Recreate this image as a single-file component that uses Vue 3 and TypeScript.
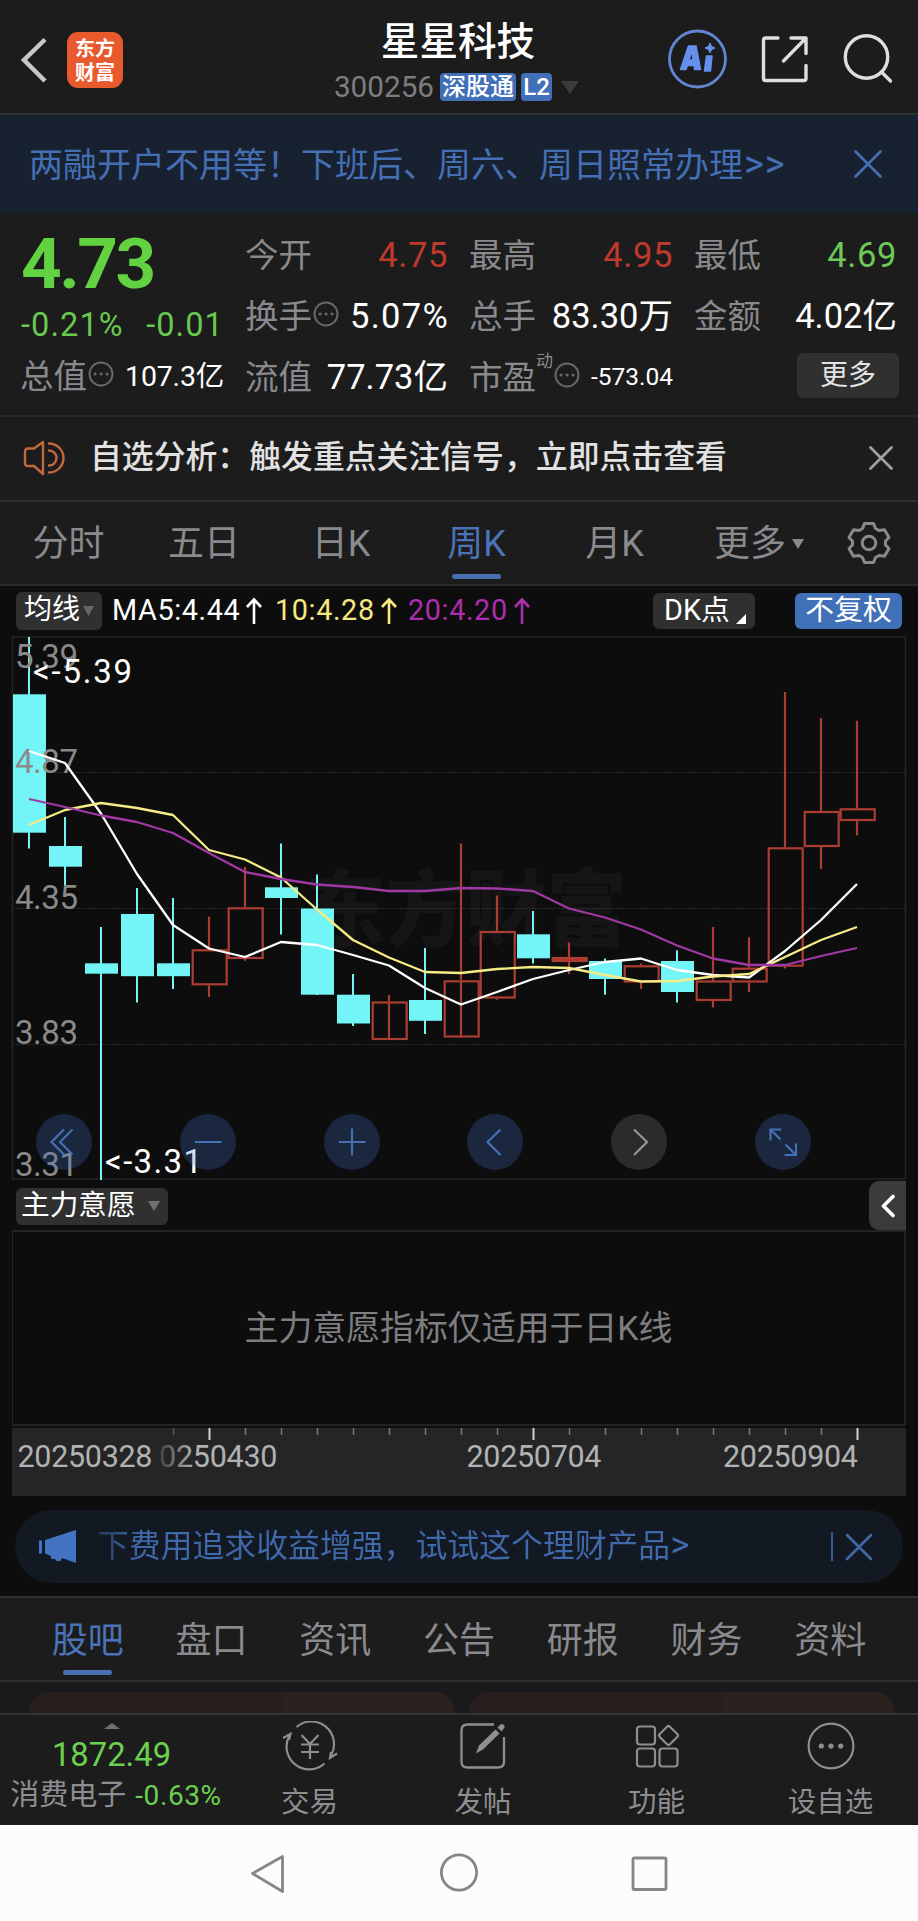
<script setup lang="ts">
interface Candle {
  up: boolean
  high: number
  low: number
  top: number
  bottom: number
}

const c = (up: number, high: number, low: number, top: number, bottom: number): Candle => ({
  up: up === 1, high, low, top, bottom,
})

const candles: Candle[] = [
  c(0, 637, 848.5, 694.3, 832.7),
  c(0, 817, 886, 846, 866.7),
  c(0, 927, 1180, 963.3, 973.7),
  c(0, 888, 1002.5, 914, 976.2),
  c(0, 898, 989, 963.3, 976.2),
  c(1, 916.5, 997, 949.3, 985.3),
  c(1, 867, 960.7, 907.3, 959),
  c(0, 843.5, 934.5, 887.3, 898),
  c(0, 874.5, 995, 908.5, 994.7),
  c(0, 974, 1026, 994.7, 1023.5),
  c(1, 995, 1002, 1001.5, 1040),
  c(0, 948, 1034, 1000, 1020.8),
  c(1, 843.5, 982, 980.3, 1037.5),
  c(1, 895.5, 999.7, 931, 998.5),
  c(0, 911, 963.5, 934.3, 958.3),
  c(1, 942.5, 974, 957, 962),
  c(0, 958.5, 994.7, 961, 979),
  c(1, 963.5, 989, 965.3, 982.5),
  c(0, 950.3, 1002.5, 961, 992),
  c(1, 927, 1007.5, 980.5, 1001),
  c(1, 937.3, 992, 967.7, 982.5),
  c(1, 692, 968.5, 847.3, 966.7),
  c(1, 718, 869, 811, 847),
  c(1, 720.7, 835.5, 808.3, 821),
]
const cx = (i: number): number => 29 + i * 36

const line = (ys: number[]): string => ys.map((y, i) => `${cx(i)},${y}`).join(' ')
const ma5 = line([751, 763, 813.5, 874, 925, 948.5, 957, 942, 945, 955, 965.5, 988, 1004.5, 992, 979, 970, 962, 958.5, 970, 975, 977.5, 951, 920, 884])
const ma10 = line([825, 810, 803, 808, 815, 850, 859.5, 877.5, 909.5, 940, 957.5, 972, 973, 969, 967, 968, 975, 981.5, 981, 976.5, 974, 957, 940, 927])
const ma20 = line([799, 807, 815.5, 822, 833, 853, 872, 879, 884.5, 887, 891, 891, 888, 888.5, 891, 908.5, 917.5, 929.5, 945.5, 958.5, 965, 965, 956, 948])

const scale = [
  { t: '5.39', y: 668 }, { t: '4.87', y: 772.5 }, { t: '4.35', y: 908.5 },
  { t: '3.83', y: 1043.5 }, { t: '3.31', y: 1175.5 },
]
const ticks = Array.from({ length: 20 }, (_, i) => ({ x: 173 + i * 36, long: i % 9 === 1, faint: i === 0 }))
const sections = ['股吧', '盘口', '资讯', '公告', '研报', '财务', '资料']
</script>

<template>
  <div class="app">
    <header class="header">
      <div class="left">
        <svg width="28" height="50" viewBox="0 0 28 50"><path d="M25 4.500L4 25L25 46" fill="none" stroke="#c8c8c8" stroke-width="4.500" /></svg>
        <div class="logo"><span>东方</span><span>财富</span></div>
      </div>
      <div class="title">
        <div class="name">星星科技</div>
        <div class="code">
          <span class="num">300256</span><span class="badge b1">深股通</span><span class="badge b2">L2</span>
          <svg width="18" height="13" viewBox="0 0 18 13"><path d="M0 0H18L9 13Z" fill="#3b3b3b" /></svg>
        </div>
      </div>
      <div class="right">
        <svg width="60" height="60" viewBox="0 0 60 60">
          <circle cx="29.500" cy="30" r="28" fill="none" stroke="#6386d4" stroke-width="2.800" />
          <g fill="#6690ee" stroke="#6690ee" stroke-width="1.500" stroke-linejoin="round">
            <path fill-rule="evenodd" d="M12.500 40.500L20.500 17H28L32.500 40.500H26.500L26 36.500H19.500L18 40.500ZM21 31H25L24.500 23.500H23.500Z" />
            <path d="M38.500 27H44L42.500 42H36.500Z" />
            <path d="M42 14.500L43.300 17.700L46.500 19L43.300 20.300L42 23.500L40.700 20.300L37.500 19L40.700 17.700Z" />
          </g>
        </svg>
        <svg class="export" width="50" height="50" viewBox="0 0 50 50"><g fill="none" stroke="#dedede" stroke-width="3.400" stroke-linecap="round" stroke-linejoin="round"><path d="M18 4H5.500Q3.500 4 3.500 6V44.500Q3.500 46.500 5.500 46.500H44Q46 46.500 46 44.500V31.500" /><path d="M31 4H46V19.500M46 4L23.500 27" /></g></svg>
        <svg class="search" width="50" height="50" viewBox="0 0 50 50"><g fill="none" stroke="#dedede" stroke-width="3.400" stroke-linecap="round"><circle cx="23.500" cy="23" r="21.200" /><path d="M38.500 38L47.500 47" /></g></svg>
      </div>
    </header>

    <div class="banner">
      <span>两融开户不用等！下班后、周六、周日照常办理<i>&gt;&gt;</i></span>
      <svg width="30" height="30" viewBox="0 0 30 30"><path d="M2.500 2.500L27.500 27.500M27.500 2.500L2.500 27.500" stroke="#4570b8" stroke-width="2.600" stroke-linecap="round" /></svg>
    </div>

    <section class="quote">
      <div class="col first">
        <div class="price">4.73</div>
        <div class="change"><span>-0.21%</span><span>-0.01</span></div>
        <div class="row"><label>总值</label><svg class="dots" width="26" height="26" viewBox="0 0 26 26"><circle cx="13" cy="13" r="11.500" /><path d="M7 13h.1M13 13h.1M19 13h.1" /></svg><b class="mid">107.3亿</b></div>
      </div>
      <div class="col">
        <div class="row"><label>今开</label><b class="red">4.75</b></div>
        <div class="row"><label>换手</label><svg class="dots" width="26" height="26" viewBox="0 0 26 26"><circle cx="13" cy="13" r="11.500" /><path d="M7 13h.1M13 13h.1M19 13h.1" /></svg><b class="wide">5.07%</b></div>
        <div class="row"><label>流值</label><b>77.73亿</b></div>
      </div>
      <div class="col">
        <div class="row"><label>最高</label><b class="red">4.95</b></div>
        <div class="row"><label>总手</label><b>83.30万</b></div>
        <div class="row"><label>市盈</label><sup>动</sup><svg class="dots" width="26" height="26" viewBox="0 0 26 26"><circle cx="13" cy="13" r="11.500" /><path d="M7 13h.1M13 13h.1M19 13h.1" /></svg><b class="small">-573.04</b></div>
      </div>
      <div class="col">
        <div class="row"><label>最低</label><b class="green">4.69</b></div>
        <div class="row"><label>金额</label><b>4.02亿</b></div>
        <div class="row"><button class="more">更多</button></div>
      </div>
    </section>

    <div class="notice">
      <svg width="42" height="36" viewBox="0 0 42 36"><g fill="none" stroke="#c0693c" stroke-width="2.400" stroke-linejoin="round" stroke-linecap="round"><path d="M20 2V34L11 26H5Q2 26 2 23V12Q2 8.500 5 8.500H11Z" /><path d="M26 3.500A14.500 14.500 0 0 1 26 32.500M26 10.500A7.500 7.500 0 0 1 26 25.500" /></g></svg>
      <span>自选分析：触发重点关注信号，立即点击查看</span>
      <svg class="x" width="26" height="26" viewBox="0 0 26 26"><path d="M2.500 2.500L23.500 23.500M23.500 2.500L2.500 23.500" stroke="#a0a0a0" stroke-width="2.800" stroke-linecap="round" /></svg>
    </div>

    <nav class="periods">
      <span>分时</span><span>五日</span><span>日K</span><span class="on">周K</span><span>月K</span>
      <span class="drop">更多<svg width="12" height="10" viewBox="0 0 12 10"><path d="M0 0H12L6 10Z" fill="#8a8a8e" /></svg></span>
      <svg class="gear" width="46" height="46" viewBox="0 0 46 46"><g fill="none" stroke="#8a8a8e" stroke-width="3"><path stroke-linejoin="round" d="M18.500 3.500H27.500L29.500 8.500L33 10.500L38.500 9.700L43 17.500L39.500 21V25L43 28.500L38.500 36.300L33 35.500L29.500 37.500L27.500 42.500H18.500L16.500 37.500L13 35.500L7.500 36.300L3 28.500L6.500 25V21L3 17.500L7.500 9.700L13 10.500L16.500 8.500Z" /><circle cx="23" cy="23" r="6.800" /></g></svg>
    </nav>

    <div class="tools">
      <span class="chip ma">均线<svg width="11" height="10" viewBox="0 0 11 10"><path d="M0 0H11L5.500 10Z" fill="#666" /></svg></span>
      <span class="avg a5">MA5:4.44<svg width="18" height="28" viewBox="0 0 18 28"><path d="M9 27V3M2 10L9 2.500L16 10" /></svg></span>
      <span class="avg a10">10:4.28<svg width="18" height="28" viewBox="0 0 18 28"><path d="M9 27V3M2 10L9 2.500L16 10" /></svg></span>
      <span class="avg a20">20:4.20<svg width="18" height="28" viewBox="0 0 18 28"><path d="M9 27V3M2 10L9 2.500L16 10" /></svg></span>
      <span class="chip dk">DK点<svg width="10" height="10" viewBox="0 0 10 10"><path d="M10 0V10H0Z" fill="#fff" /></svg></span>
      <span class="chip adj">不复权</span>
    </div>

    <svg class="chart" width="918" height="546" viewBox="0 635 918 546">
      <text class="mark" x="305" y="940" textLength="322" lengthAdjust="spacingAndGlyphs">东方财富</text>
      <rect x="12.500" y="637" width="893" height="542" fill="none" stroke="#242424" stroke-width="1.600" />
      <path d="M13 772.500H905M13 908.500H905M13 1044.500H905" stroke="#333" stroke-width="1" stroke-dasharray="1.500 1.500" />
      <template v-for="(k, i) in candles" :key="i">
        <g v-if="k.up" stroke="#ac3d33" stroke-width="2.200" fill="none">
          <path :d="`M${cx(i)} ${k.high}V${k.top}M${cx(i)} ${k.bottom}V${k.low}`" />
          <rect :x="cx(i) - 16.300" :y="k.top + 1" width="34" :height="k.bottom - k.top - 2" :fill="k.bottom - k.top < 6 ? '#b5352c' : 'none'" />
        </g>
        <g v-else fill="#73f5f7">
          <rect :x="cx(i) - 1" :y="k.high" width="2" :height="k.low - k.high" />
          <rect :x="cx(i) - 16" :y="k.top" width="33" :height="k.bottom - k.top" />
        </g>
      </template>
      <g class="scale"><text v-for="s in scale" :key="s.t" x="15" :y="s.y" textLength="63">{{ s.t }}</text></g>
      <g fill="none" stroke-width="2.300" stroke-linejoin="round">
        <polyline :points="ma5" stroke="#fff" />
        <polyline :points="ma10" stroke="#f6ec86" />
        <polyline :points="ma20" stroke="#a038a4" />
      </g>
      <g class="peak">
        <text x="33" y="682.500" textLength="99">&lt;-5.39</text>
        <text x="105" y="1172.500" textLength="97">&lt;-3.31</text>
      </g>
      <g fill="rgb(69,121,213)" fill-opacity=".25">
        <circle cx="64" cy="1142" r="28" /><circle cx="208" cy="1142" r="28" /><circle cx="352" cy="1142" r="28" />
        <circle cx="495" cy="1142" r="28" /><circle cx="783" cy="1142" r="28" />
      </g>
      <circle cx="639" cy="1142" r="28" fill="#2b2b2b" />
      <g fill="none" stroke="#4470b4" stroke-width="2.200">
        <path d="M64 1129.500L51.500 1142L64 1154.500M72.500 1129.500L60 1142L72.500 1154.500" />
        <path d="M195 1142H221.500M339 1142H365.500M352 1128.500V1155.500" />
        <path d="M500.500 1129.500L487.500 1142L500.500 1155" />
        <path d="M781.500 1129.500H770.500V1140.500M771 1130L780.500 1139.500M784.500 1155H796V1143.500M796 1155L785.500 1144.500" />
      </g>
      <path d="M634 1129.500L647 1142L634 1155" fill="none" stroke="#949494" stroke-width="2.200" />
    </svg>

    <div class="indicator">
      <span class="chip">主力意愿<svg width="12" height="10" viewBox="0 0 12 10"><path d="M0 0H12L6 10Z" fill="#707070" /></svg></span>
      <span class="handle"><svg width="16" height="24" viewBox="0 0 16 24"><path d="M13 2.500L3.500 12L13 21.500" fill="none" stroke="#fff" stroke-width="3.600" stroke-linecap="round" stroke-linejoin="round" /></svg></span>
    </div>
    <div class="panel">主力意愿指标仅适用于日K线</div>
    <svg class="axis" width="894" height="68" viewBox="12 1428 894 68">
      <defs><linearGradient id="fade" gradientUnits="userSpaceOnUse" x1="154" y1="0" x2="194" y2="0"><stop offset="0" stop-color="#b2b2b2" stop-opacity="0.100" /><stop offset="1" stop-color="#b2b2b2" /></linearGradient></defs>
      <line v-for="t in ticks" :key="t.x" :x1="t.x + 0.500" :x2="t.x + 0.500" y1="1428" :y2="t.long ? 1440 : 1435" :stroke="t.long ? '#d0d0d0' : t.faint ? '#555' : '#777'" :stroke-width="t.long ? 2 : 1.500" />
      <text x="17.500" y="1467" textLength="135">20250328</text>
      <text x="159" y="1467" textLength="118.500" fill="url(#fade)">0250430</text>
      <text x="466.500" y="1467" textLength="135">20250704</text>
      <text x="723" y="1467" textLength="135">20250904</text>
    </svg>

    <div class="promo">
      <svg width="38" height="34" viewBox="0 0 38 34"><path d="M0 10.500H3V23.500H0ZM6 10L37 0V33L23 28L21.500 31H17.500L16 29H12V26L6 23.500Z" fill="#4374c4" /></svg>
      <span>下费用追求收益增强，试试这个理财产品<em>&gt;</em></span>
      <i></i>
      <svg width="28" height="28" viewBox="0 0 28 28"><path d="M2 2L26 26M26 2L2 26" stroke="#4069a8" stroke-width="2.600" stroke-linecap="round" /></svg>
    </div>

    <nav class="sections"><span v-for="(s, i) in sections" :key="s" :class="{ on: i === 0 }">{{ s }}</span></nav>
    <div class="cards"><div></div><div></div></div>

    <footer class="bottom">
      <div class="index">
        <svg width="16" height="6" viewBox="0 0 16 6"><path d="M0 6L8 0L16 6Z" fill="#707074" /></svg>
        <div class="val">1872.49</div>
        <div class="sector"><span>消费电子</span><b>-0.63%</b></div>
      </div>
      <div class="item">
        <svg width="56" height="50" viewBox="0 0 56 50"><g fill="none" stroke="#8e8e92" stroke-width="2.200"><path d="M14.500 6A22.700 22.700 0 0 1 49 34.500M42.500 42.500A22.700 22.700 0 0 1 7.500 14.500" /><path d="M1 17L8.500 13L7 19M55 32.500L48 37L49 31" /><path d="M19.500 14L28 23L36.500 14M28 23V38M19 23.500H37M19 31H37" /></g></svg>
        <span>交易</span>
      </div>
      <div class="item">
        <svg width="50" height="50" viewBox="0 0 50 50"><path d="M36 3.500H9.500Q3.500 3.500 3.500 9.500V40.500Q3.500 46.500 9.500 46.500H40Q46 46.500 46 40.500V16" fill="none" stroke="#8e8e92" stroke-width="2.300" /><path d="M18 32.500L21 24.500L37.500 8.500L41.500 12.500L25 28.500ZM39.500 6.500L43 3Q47 3 46.500 6.500L43.500 10.500Z" fill="#8e8e92" /></svg>
        <span>发帖</span>
      </div>
      <div class="item">
        <svg width="50" height="50" viewBox="0 0 50 50"><g fill="none" stroke="#8e8e92" stroke-width="2.200"><rect x="5" y="5.500" width="18" height="18" rx="3" /><rect x="5" y="27.500" width="18" height="18" rx="3" /><rect x="27.500" y="27.500" width="18" height="18" rx="3" /><rect x="29.300" y="7.300" width="14.400" height="14.400" rx="2" transform="rotate(45 36.500 14.500)" /></g></svg>
        <span>功能</span>
      </div>
      <div class="item">
        <svg width="50" height="50" viewBox="0 0 50 50"><circle cx="25" cy="25" r="22.400" fill="none" stroke="#8e8e92" stroke-width="2.200" /><g fill="#8e8e92"><circle cx="15.300" cy="25" r="2.600" /><circle cx="25" cy="25" r="2.600" /><circle cx="34.700" cy="25" r="2.600" /></g></svg>
        <span>设自选</span>
      </div>
    </footer>

    <div class="system">
      <svg width="918" height="96" viewBox="0 0 918 96"><g fill="none" stroke="#868686" stroke-width="2.800" stroke-linejoin="round"><path d="M252.500 48.500L282.500 31.500V66.500Z" /><circle cx="459" cy="47.500" r="17.600" /><rect x="633" y="33" width="33" height="31.500" rx="1.500" /></g></svg>
    </div>
  </div>
</template>

<style>
body { background: #0d0d0d; }
</style>

<style scoped>
.app { width: 918px; height: 1921px; overflow: hidden; background: #0d0d0d; color: #fff; font-family: Roboto, "Noto Sans CJK SC", sans-serif; font-size: 32px; line-height: 1.17; white-space: nowrap; }
.app * { box-sizing: border-box; }
svg { display: block; flex: none; }
i, em { font-style: normal; }
b { font-weight: 400; }

.header { height: 115px; display: grid; grid-template-columns: 250px 418px 250px; background: #1c1c1c; border-bottom: 2px solid #303030; }
.left { display: flex; align-items: center; padding: 7px 0 0 20px; height: 113px; }
.logo { width: 56px; height: 56px; margin-left: 19px; border-radius: 11px; background: #e9592e; display: flex; flex-direction: column; align-items: center; justify-content: center; font: 700 20px/24px "Noto Sans CJK SC", sans-serif; }
.title { padding-top: 18px; display: flex; flex-direction: column; align-items: center; }
.name { font-size: 38.600px; line-height: 48px; font-weight: 500; padding-right: 2px; }
.code { display: flex; align-items: center; margin-top: 6px; height: 30px; padding-right: 5px; }
.code .num { font-size: 29.700px; color: #7d7d81; margin-right: 6px; font-weight: 400; }
.badge { background: #4270b8; border-radius: 4px; height: 28px; line-height: 29px; text-align: center; font-size: 24px; font-weight: 500; }
.b1 { width: 76px; margin-right: 5px; }
.b2 { width: 31px; margin-right: 9px; }
.right { display: flex; align-items: center; padding: 5px 0 0 0; height: 113px; }
.export { margin-left: 32px; }
.search { margin-left: 33px; }

.banner { height: 98px; background: #18212f; display: flex; align-items: center; justify-content: space-between; padding: 0 35px 0 29px; color: #456fb4; font-size: 34px; }
.banner span { padding-top: 3px; }
.banner i { font-size: 38px; line-height: 34px; letter-spacing: 1px; margin-left: 1px; }

.quote { height: 204px; background: #1c1c1c; border-bottom: 2px solid #272727; display: grid; grid-template-columns: 203px 202px 203px 202px; column-gap: 22px; padding: 12px 0 0 21px; }
.col { display: flex; flex-direction: column; min-width: 0; }
.row { height: 61px; display: flex; align-items: center; font-size: 34.500px; }
.row label { color: #8a8a8e; font-size: 33.500px; margin-left: -1px; }
.row b { margin-left: auto; }
.row b.mid { font-size: 28.500px; letter-spacing: -0.200px; }
.row b.small { font-size: 24.500px; }
.row b.wide { letter-spacing: 1.300px; margin-right: -1px; }
.row .red, .row .green { letter-spacing: 0.600px; }
.red { color: #c0392d; }
.green { color: #6cc955; }
.price { height: 79px; line-height: 78px; font-size: 71px; font-weight: 700; color: #62d241; letter-spacing: -2.500px; }
.change { height: 43px; display: flex; justify-content: space-between; align-items: center; color: #68c94f; padding-right: 0; font-size: 32.500px; letter-spacing: 1.100px; }
.dots { margin: -6px 0 0 1px; fill: none; stroke: #68686c; stroke-width: 2; stroke-linecap: round; }
.dots path { stroke-width: 3; }
.first .row { height: 60px; }
.row sup { font-size: 17px; color: #8a8a8e; align-self: flex-start; line-height: 20px; margin-top: 4px; vertical-align: baseline; }
.more { width: 102px; height: 45px; margin: -4px -2px 0 auto; border: 0; border-radius: 6px; background: #303030; color: #e4e4e4; font: 28px/40px "Noto Sans CJK SC", sans-serif; padding: 0 0 5px; flex: none; }

.notice { height: 85px; background: #1c1c1c; border-bottom: 2px solid #2e2e2e; display: flex; align-items: center; padding: 0 24px 1px 23px; font-size: 31.850px; color: #e2e2e2; }
.notice span { margin-left: 25px; font-weight: 500; }
.x { margin-left: auto; }

.periods { height: 84px; background: #1c1c1c; border-bottom: 2px solid #2b2b2b; display: grid; grid-template-columns: 137px 134px 140px 131px 145px 159px 72px; align-items: center; color: #8a8a8e; font-size: 36px; padding-top: 3px; }
.periods span { text-align: center; position: relative; }
.periods .on, .sections .on { color: #4a73b8; }
.on::after { content: ""; position: absolute; bottom: -13px; left: 50%; margin-left: -25px; width: 49px; height: 5px; border-radius: 3px; background: #4a70b2; }
.drop { display: flex; align-items: center; padding-left: 27px; gap: 6px; }
.gear { margin-top: -3px; }

.tools { height: 49px; display: flex; align-items: center; padding: 0 16px; font-size: 28.800px; }
.chip { background: #303030; border-radius: 6px; height: 38px; display: flex; align-items: center; }
.ma { width: 86px; padding-left: 8px; gap: 3px; margin-right: 10px; font-size: 28px; }
.avg { display: flex; align-items: center; gap: 5px; color: #fff; letter-spacing: 0.600px; padding-top: 1px; }
.avg svg { stroke: currentColor; fill: none; stroke-width: 2.600; }
.a5 { width: 163px; }
.a10 { width: 133px; color: #f5e97f; }
.a20 { color: #ab2fac; }
.dk { margin-left: auto; margin-right: 40px; width: 102px; height: 36px; padding-left: 11px; gap: 6px; }
.dk svg { margin-top: 16px; }
.adj { width: 107px; height: 36px; background: #4070b8; justify-content: center; padding-top: 1px; }

.chart text { font-size: 33px; }
.chart .mark { font: 900 84px "Noto Sans CJK SC", sans-serif; fill: #151515; }
.scale { fill: #8a8a8a; }
.peak { fill: #fff; }

.indicator { height: 49px; display: flex; align-items: center; justify-content: space-between; padding: 0 12px 0 16px; }
.indicator .chip { width: 152px; height: 37px; padding-left: 5px; gap: 12px; font-size: 28.700px; margin-top: 1px; }
.handle { width: 37px; height: 49px; background: #3b3b3b; border-radius: 10px 0 0 10px; display: flex; align-items: center; justify-content: center; }
.panel { margin: 0 12px; height: 196px; border: 2px solid #232323; border-width: 2px 2px 2px 1px; display: flex; align-items: center; justify-content: center; padding-top: 2px; color: #7e7e82; font-size: 33.900px; }
.axis { margin: 2px 12px 0; background: #252527; fill: #b2b2b2; font-size: 30.500px; }

.promo { margin: 14px 15px 0; height: 73px; border-radius: 37px; background: #131922; display: flex; align-items: center; padding: 0 30px 0 24px; font-size: 31.850px; color: #3f69ab; }
.promo span { margin: 0 auto 0 20px; padding-top: 1px; background: linear-gradient(90deg, #233857, #3f69ab 42px); background-clip: text; color: transparent; }
.promo em { font-size: 37px; line-height: 30px; }
.promo i { width: 2px; height: 29px; background: #38598f; margin-right: 12px; }

.sections { margin-top: 13px; height: 86px; background: #1c1c1c; border-top: 2px solid #303030; border-bottom: 2px solid #303030; display: flex; align-items: center; padding: 5px 26px 0; color: #8a8a8e; font-size: 36px; }
.sections span { flex: 1; text-align: center; position: relative; }
.sections .on::after { bottom: -12px; }
.cards { height: 31px; background: #1a1a1c; display: flex; gap: 14px; padding: 10px 23px 0 29px; overflow: hidden; }
.cards div { flex: 1; border-radius: 20px 20px 0 0; background: linear-gradient(90deg, #281e1d 0 59%, #2b211f 60%); }

.bottom { height: 112px; background: #1c1c1c; border-top: 2px solid #333; display: grid; grid-template-columns: 223px 173px 174px 173px 175px; color: #8e8e92; }
.index { padding-top: 8px; display: flex; flex-direction: column; align-items: center; }
.val { color: #6bd04f; font-size: 32.800px; line-height: 40px; margin-top: 6px; }
.sector { display: flex; align-items: center; margin-top: 4px; font-size: 29px; gap: 9px; padding-left: 9px; }
.sector b { color: #6bd04f; font-size: 28px; letter-spacing: 0.600px; }
.item { padding-top: 6px; display: flex; flex-direction: column; align-items: center; font-size: 28.500px; }
.item span { margin-top: 14px; line-height: 36px; }
.system { height: 96px; background: #fcfcfc; }
</style>
